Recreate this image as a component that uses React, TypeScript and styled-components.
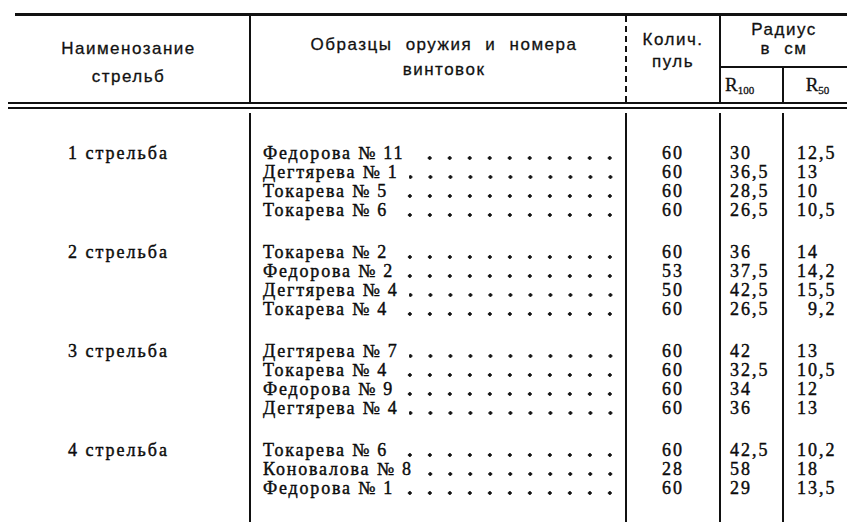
import React from "react";
import styled, { createGlobalStyle } from "styled-components";

const GlobalStyle = createGlobalStyle`
  html, body {
    margin: 0;
    padding: 0;
    background: #fff;
    overflow: hidden;
  }
  #root {
    width: 864px;
    height: 522px;
    overflow: hidden;
  }
`;

const INK = "#111";
const COLS = "241px 376px 94px 63px 65px";

//------ шапка таблицы ------
const Page = styled.div`
  width: 839px;
  margin-left: 8px;
  color: ${INK};
`;

const TopRule = styled.div`
  height: 3px;
  margin: 13px 0 0 7px;
  background: ${INK};
`;

const Head = styled.div`
  display: grid;
  grid-template-columns: ${COLS};
  grid-template-rows: 50px 36px;
  font-family: "Liberation Sans", Arial, sans-serif;
  font-size: 17px;
  letter-spacing: 1.5px;
  word-spacing: 7px;
  -webkit-text-stroke: 0.3px ${INK};
`;

const HeadCell = styled.div<{
  $top: number;
  $lh: number;
  $divider?: "solid" | "dashed";
  $shift?: number;
}>`
  grid-row: 1 / span 2;
  box-sizing: border-box;
  padding-top: ${(p) => p.$top}px;
  padding-left: ${(p) => p.$shift ?? 0}px;
  line-height: ${(p) => p.$lh}px;
  text-align: center;
  border-left: ${(p) => (p.$divider ? `2px ${p.$divider} ${INK}` : "none")};
`;

const RadiusCell = styled.div`
  grid-column: 4 / span 2;
  grid-row: 1;
  padding-top: 4px;
  line-height: 19px;
  text-align: center;
  border-left: 2px solid ${INK};
`;

const SubCell = styled.div<{ $align: "left" | "center"; $pad: number }>`
  grid-row: 2;
  box-sizing: border-box;
  border-top: 2px solid ${INK};
  border-left: 2px solid ${INK};
  padding-left: ${(p) => p.$pad}px;
  text-align: ${(p) => p.$align};
  line-height: 34px;
  font-family: "Liberation Serif", "Times New Roman", serif;
  font-size: 19px;
  letter-spacing: 0;
  sub {
    font-size: 11px;
    vertical-align: -3px;
    line-height: 0;
  }
`;

const DoubleRule = styled.div`
  height: 3px;
  border-top: 2px solid ${INK};
  border-bottom: 2px solid ${INK};
`;

//------ тело таблицы ------
const Body = styled.div`
  display: grid;
  grid-template-columns: ${COLS};
  grid-template-rows: auto auto auto 1fr;
  min-height: 420px;
  margin-top: 4px;
  font-family: "Liberation Serif", "Times New Roman", serif;
  font-size: 18px;
  -webkit-text-stroke: 0.4px #000;
`;

const Cell = styled.div<{ $top: number; $divider?: boolean }>`
  padding-top: ${(p) => p.$top}px;
  border-left: ${(p) => (p.$divider ? `2px solid ${INK}` : "none")};
`;

const LabelCell = styled(Cell)`
  padding-right: 20px;
  text-align: center;
  letter-spacing: 2px;
  line-height: 19px;
`;

const NameCell = styled(Cell)`
  padding-left: 12px;
  padding-right: 5px;
`;

const NumCell = styled(Cell)<{ $pad?: number; $center?: boolean }>`
  padding-left: ${(p) => p.$pad ?? 0}px;
  text-align: ${(p) => (p.$center ? "center" : "left")};
  letter-spacing: 2px;
`;

const Line = styled.div`
  height: 19px;
  line-height: 19px;
  white-space: pre;
`;

const NameLine = styled(Line)`
  display: flex;
`;

const Name = styled.span`
  letter-spacing: 1.8px;
`;

const Leader = styled.span`
  flex: 1;
  margin-left: 10px;
  background-image: radial-gradient(
    circle at 10px 14px,
    #111 1.5px,
    transparent 2.1px
  );
  background-size: 20px 19px;
  background-repeat: repeat-x;
  background-position: right top;
`;

type Row = [string, string, string, string];

const groups: { label: string; rows: Row[] }[] = [
  {
    label: "1 стрельба",
    rows: [
      ["Федорова № 11", "60", "30", "12,5"],
      ["Дегтярева № 1", "60", "36,5", "13"],
      ["Токарева № 5", "60", "28,5", "10"],
      ["Токарева № 6", "60", "26,5", "10,5"],
    ],
  },
  {
    label: "2 стрельба",
    rows: [
      ["Токарева № 2", "60", "36", "14"],
      ["Федорова № 2", "53", "37,5", "14,2"],
      ["Дегтярева № 4", "50", "42,5", "15,5"],
      ["Токарева № 4", "60", "26,5", "\u20079,2"],
    ],
  },
  {
    label: "3 стрельба",
    rows: [
      ["Дегтярева № 7", "60", "42", "13"],
      ["Токарева № 4", "60", "32,5", "10,5"],
      ["Федорова № 9", "60", "34", "12"],
      ["Дегтярева № 4", "60", "36", "13"],
    ],
  },
  {
    label: "4 стрельба",
    rows: [
      ["Токарева № 6", "60", "42,5", "10,2"],
      ["Коновалова № 8", "28", "58", "18"],
      ["Федорова № 1", "60", "29", "13,5"],
    ],
  },
];

const App = () => {
  return (
    <>
      <GlobalStyle />
      <Page>
        <TopRule />
        <Head>
          <HeadCell $top={19} $lh={28}>
            Наименозание
            <br />
            стрельб
          </HeadCell>
          <HeadCell $top={16} $lh={25} $divider="solid" $shift={12}>
            Образцы оружия и номера
            <br />
            винтовок
          </HeadCell>
          <HeadCell $top={13} $lh={22} $divider="dashed">
            Колич.
            <br />
            пуль
          </HeadCell>
          <RadiusCell>
            Радиус
            <br />в см
          </RadiusCell>
          <SubCell $align="left" $pad={4}>
            R<sub>100</sub>
          </SubCell>
          <SubCell $align="center" $pad={4}>
            R<sub>50</sub>
          </SubCell>
        </Head>
        <DoubleRule />
        <Body>
          {groups.map((g, gi) => {
            const top = gi === 0 ? 31 : 23;
            return (
              <React.Fragment key={g.label}>
                <LabelCell $top={top}>{g.label}</LabelCell>
                <NameCell $top={top} $divider>
                  {g.rows.map((r) => (
                    <NameLine key={r[0]}>
                      <Name>{r[0]}</Name>
                      <Leader />
                    </NameLine>
                  ))}
                </NameCell>
                <NumCell $top={top} $divider $center>
                  {g.rows.map((r, i) => (
                    <Line key={i}>{r[1]}</Line>
                  ))}
                </NumCell>
                <NumCell $top={top} $divider $pad={9}>
                  {g.rows.map((r, i) => (
                    <Line key={i}>{r[2]}</Line>
                  ))}
                </NumCell>
                <NumCell $top={top} $divider $pad={13}>
                  {g.rows.map((r, i) => (
                    <Line key={i}>{r[3]}</Line>
                  ))}
                </NumCell>
              </React.Fragment>
            );
          })}
        </Body>
      </Page>
    </>
  );
};

export default App;
